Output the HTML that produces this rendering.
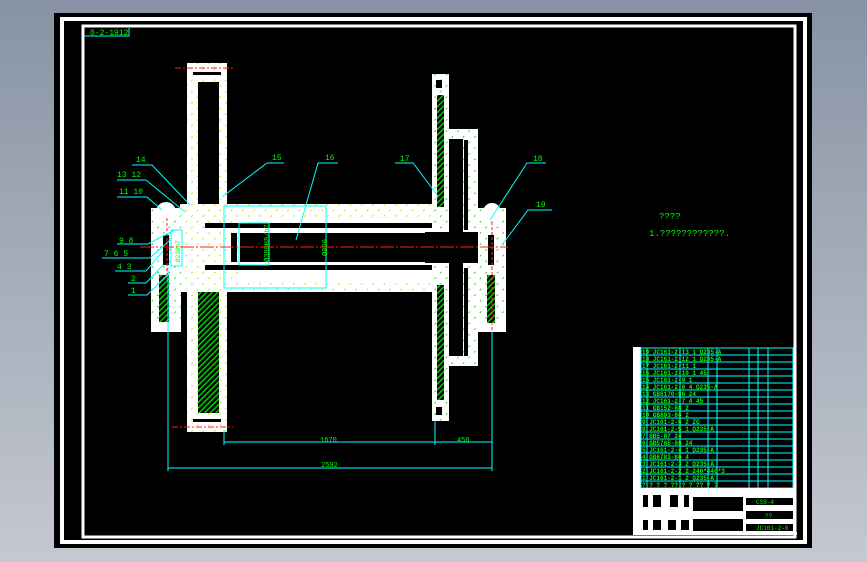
<!DOCTYPE html>
<html><head><meta charset="utf-8"><style>
html,body{margin:0;padding:0;}
body{width:867px;height:562px;overflow:hidden;background:linear-gradient(#8793a4,#c4c8d0);}
svg{position:absolute;left:0;top:0;}
text{font-family:"Liberation Mono",monospace;fill:#00ff00;}
</style></head><body>
<svg width="867" height="562" viewBox="0 0 867 562" xmlns="http://www.w3.org/2000/svg">
<defs>
<pattern id="hg" width="4" height="4" patternUnits="userSpaceOnUse" patternTransform="rotate(45)"><rect width="4" height="4" fill="#000"/><rect width="1.4" height="4" fill="#00dd00"/></pattern>
<pattern id="hy" width="8" height="8" patternUnits="userSpaceOnUse" patternTransform="rotate(45)"><rect width="8" height="8" fill="#fff"/><rect width="1" height="2" fill="#d8d800"/></pattern>
<pattern id="hgw" width="8" height="8" patternUnits="userSpaceOnUse" patternTransform="rotate(45)"><rect width="8" height="8" fill="#fff"/><rect width="1" height="2" fill="#33cc33"/></pattern>
</defs>
<rect x="54" y="13" width="758" height="535" fill="#000"/>
<rect x="62" y="19" width="743" height="523" fill="none" stroke="#fff" stroke-width="4"/>
<rect x="83" y="26" width="712" height="511" fill="none" stroke="#fff" stroke-width="3"/>
<text x="90" y="35" font-size="8">0-2-1912</text>
<polyline points="84,36 129,36 129,28" fill="none" stroke="#00ffff" stroke-width="1"/>

<rect x="187" y="63" width="40" height="369" fill="url(#hy)"/>
<rect x="198" y="82" width="21" height="126" fill="#000"/>
<rect x="198" y="286" width="21" height="127" fill="url(#hg)"/>
<rect x="193" y="72" width="28" height="3" fill="#000"/>
<rect x="193" y="419" width="28" height="3" fill="#000"/>
<line x1="175" y1="68" x2="233" y2="68" stroke="#ff2020" stroke-dasharray="6,2,2,2"/>
<line x1="172" y1="427" x2="233" y2="427" stroke="#ff2020" stroke-dasharray="6,2,2,2"/>

<rect x="180" y="204" width="292" height="88" fill="url(#hy)"/>
<rect x="240" y="218" width="192" height="61" fill="#fff"/>
<rect x="205" y="223" width="236" height="5" fill="#000"/>
<rect x="205" y="265" width="236" height="5" fill="#000"/>
<rect x="240" y="233" width="188" height="29" fill="#000"/>
<rect x="231" y="233" width="6" height="29" fill="#000"/>
<rect x="425" y="232" width="63" height="31" fill="#000"/>
<rect x="224" y="206" width="102" height="82" fill="none" stroke="#00ffff" stroke-width="1"/>
<rect x="239" y="223" width="30" height="42" fill="none" stroke="#00ffff" stroke-width="1"/>
<text x="0" y="0" font-size="7" transform="translate(269,262) rotate(-90)">Ø380H8/h7</text>
<text x="0" y="0" font-size="7" transform="translate(327,256) rotate(-90)">Ø850</text>

<rect x="151" y="208" width="30" height="113" fill="url(#hgw)"/>
<circle cx="166" cy="212" r="10" fill="#fff"/>
<rect x="151" y="321" width="30" height="11" fill="#fff"/>
<rect x="159" y="275" width="10" height="47" fill="url(#hg)"/>
<rect x="163" y="235" width="6" height="30" fill="#000"/>
<rect x="171" y="230" width="11" height="36" fill="#fff" stroke="#00ffff"/>
<text x="0" y="0" font-size="6" transform="translate(180,262) rotate(-90)">Ø230h7</text>
<line x1="167" y1="218" x2="167" y2="280" stroke="#ff2020" stroke-dasharray="3,2"/>

<rect x="432" y="74" width="17" height="347" fill="url(#hgw)"/>
<rect x="437" y="95" width="7" height="112" fill="url(#hg)"/>
<rect x="437" y="285" width="7" height="115" fill="url(#hg)"/>
<rect x="436" y="80" width="6" height="8" fill="#000"/>
<rect x="436" y="407" width="6" height="8" fill="#000"/>
<rect x="449" y="129" width="29" height="237" fill="url(#hgw)"/>
<rect x="449" y="139" width="14" height="217" fill="#000"/>
<rect x="464" y="140" width="4" height="90" fill="#000"/>
<rect x="464" y="268" width="4" height="88" fill="#000"/>
<rect x="425" y="232" width="56" height="31" fill="#000"/>

<rect x="478" y="208" width="28" height="113" fill="url(#hgw)"/>
<circle cx="492" cy="212" r="9" fill="#fff"/>
<rect x="478" y="321" width="28" height="11" fill="#fff"/>
<rect x="487" y="275" width="8" height="48" fill="url(#hg)"/>
<rect x="488" y="235" width="6" height="30" fill="#000"/>
<line x1="492" y1="222" x2="492" y2="330" stroke="#ff2020" stroke-dasharray="3,2"/>

<line x1="140" y1="247" x2="508" y2="247" stroke="#ff2020" stroke-dasharray="14,2,2,2"/>

<g stroke="#00ffff" stroke-width="1" fill="none">
<line x1="168" y1="268" x2="168" y2="471"/>
<line x1="224" y1="430" x2="224" y2="445"/>
<line x1="435" y1="421" x2="435" y2="445"/>
<line x1="492" y1="332" x2="492" y2="471"/>
<line x1="224" y1="442" x2="492" y2="442"/>
<line x1="168" y1="468" x2="492" y2="468"/>
<polyline points="132,165 152,165 190,205"/>
<polyline points="117,180 146,180 185,212"/>
<polyline points="117,197 147,197 162,210"/>
<polyline points="117,244 148,244 175,230"/>
<polyline points="102,258 150,258 170,240"/>
<polyline points="115,271 146,271 163,251"/>
<polyline points="128,283 146,283 163,265"/>
<polyline points="128,295 147,295 168,275"/>
<polyline points="284,163 267,163 222,197"/>
<polyline points="338,163 318,163 296,240"/>
<polyline points="395,163 413,163 438,196"/>
<polyline points="546,163 527,163 490,220"/>
<polyline points="552,210 528,210 502,245"/>
</g>
<g font-size="8">
<text x="136" y="162">14</text>
<text x="117" y="177">13 12</text>
<text x="119" y="194">11 10</text>
<text x="119" y="243">9  8</text>
<text x="104" y="256">7 6  5</text>
<text x="117" y="269">4  3</text>
<text x="131" y="281">2</text>
<text x="131" y="293">1</text>
<text x="272" y="160">15</text>
<text x="325" y="160">16</text>
<text x="400" y="161">17</text>
<text x="533" y="161">18</text>
<text x="536" y="207">19</text>
<text x="320" y="442" font-size="7">1670</text>
<text x="457" y="442" font-size="7">456</text>
<text x="321" y="467" font-size="7">2592</text>
<text x="659" y="219" font-size="9">????</text>
<text x="649" y="236" font-size="9">1.????????????.</text>
</g>

<rect x="633" y="347" width="8" height="185" fill="#fff"/>
<rect x="641" y="348" width="152" height="140" fill="#000" stroke="#00ffff"/>
<g stroke="#00ffff" stroke-width="1">
<line x1="641" y1="355" x2="793" y2="355"/><line x1="641" y1="362" x2="793" y2="362"/>
<line x1="641" y1="369" x2="793" y2="369"/><line x1="641" y1="376" x2="793" y2="376"/>
<line x1="641" y1="383" x2="793" y2="383"/><line x1="641" y1="390" x2="793" y2="390"/>
<line x1="641" y1="397" x2="793" y2="397"/><line x1="641" y1="404" x2="793" y2="404"/>
<line x1="641" y1="411" x2="793" y2="411"/><line x1="641" y1="418" x2="793" y2="418"/>
<line x1="641" y1="425" x2="793" y2="425"/><line x1="641" y1="432" x2="793" y2="432"/>
<line x1="641" y1="439" x2="793" y2="439"/><line x1="641" y1="446" x2="793" y2="446"/>
<line x1="641" y1="453" x2="793" y2="453"/><line x1="641" y1="460" x2="793" y2="460"/>
<line x1="641" y1="467" x2="793" y2="467"/><line x1="641" y1="474" x2="793" y2="474"/>
<line x1="641" y1="481" x2="793" y2="481"/>
<line x1="647" y1="348" x2="647" y2="488"/><line x1="680" y1="348" x2="680" y2="488"/>
<line x1="708" y1="348" x2="708" y2="488"/><line x1="717" y1="348" x2="717" y2="488"/>
<line x1="749" y1="348" x2="749" y2="488"/><line x1="758" y1="348" x2="758" y2="488"/>
<line x1="768" y1="348" x2="768" y2="488"/>
</g>
<g font-size="6" font-weight="bold">
<text x="642" y="354">19 JC161-2-13   1  Q235-A</text>
<text x="642" y="361">18 JC161-2-12   1  Q235-A</text>
<text x="642" y="368">17 JC161-2-11   1</text>
<text x="642" y="375">16 JC161-2-10   1     45</text>
<text x="642" y="382">15 JC161-2-9    1</text>
<text x="642" y="389">14 JC161-2-8    4  Q235-A</text>
<text x="642" y="396">13 GB6170-86   24</text>
<text x="642" y="403">12 JC161-2-7    4     45</text>
<text x="642" y="410">11 GB152-88     2</text>
<text x="642" y="417">10 GB893-86     2</text>
<text x="642" y="424">9  JC161-2-6    2    ZG</text>
<text x="642" y="431">8  JC161-2-5    1  Q235-A</text>
<text x="642" y="438">7  GB5-87      24</text>
<text x="642" y="445">6  GB5785-86   24</text>
<text x="642" y="452">5  JC161-2-4    1  Q235-A</text>
<text x="642" y="459">4  GB6783-86    4</text>
<text x="642" y="466">3  JC161-2-3    2  Q235-A</text>
<text x="642" y="473">2  JC161-2-2    2        240*440*3</text>
<text x="642" y="480">1  JC161-2-1    2  Q235-A</text>
<text x="642" y="487">? ?  ? ?   ?? ?   ?  ?? ?  ?</text>
</g>
<rect x="641" y="488" width="153" height="44" fill="#fff"/>
<rect x="643" y="495" width="5" height="12" fill="#000"/><rect x="653" y="495" width="8" height="12" fill="#000"/>
<rect x="670" y="495" width="8" height="12" fill="#000"/><rect x="684" y="495" width="5" height="12" fill="#000"/>
<rect x="643" y="520" width="5" height="10" fill="#000"/><rect x="653" y="520" width="8" height="10" fill="#000"/>
<rect x="668" y="520" width="8" height="10" fill="#000"/><rect x="681" y="520" width="8" height="10" fill="#000"/>
<rect x="693" y="497" width="50" height="14" fill="#000"/>
<rect x="693" y="519" width="50" height="12" fill="#000"/>
<rect x="746" y="498" width="47" height="7" fill="#000"/>
<rect x="746" y="511" width="47" height="8" fill="#000"/>
<rect x="746" y="524" width="47" height="7" fill="#000"/>
<g font-size="6">
<text x="756" y="504">CS8-4</text>
<text x="765" y="518">??</text>
<text x="756" y="530">JC161-2-0</text>
</g>
<rect x="633" y="532" width="164" height="3" fill="#fff"/>
</svg>
</body></html>
